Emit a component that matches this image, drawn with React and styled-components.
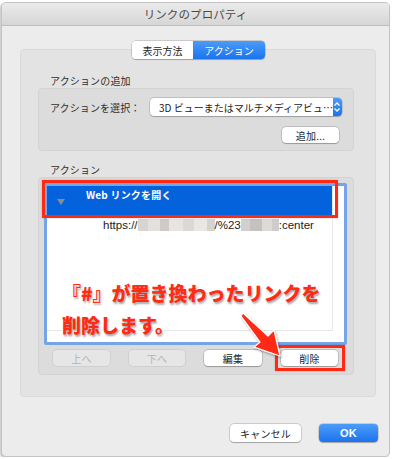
import styled, { createGlobalStyle } from 'styled-components'

const GlobalStyle = createGlobalStyle`
	*, *::before, *::after {
		box-sizing: border-box;
	}
	html, body {
		margin: 0;
		padding: 0;
		background: #ffffff;
	}
	body {
		font-family: "Noto Sans CJK JP", "Liberation Sans", sans-serif;
		color: #2b2b2b;
	}
`

const blurBlocks = [
	['#d9d4d2', 10], ['#e4e0de', 12], ['#cfcac8', 9], ['#e7e4e2', 14], ['#dcd8d6', 11], ['#e9e7e6', 13], ['#d6d2d0', 8],
]
const blurBlocks2 = [['#d2cfce', 9], ['#c4c1c0', 12], ['#dedad8', 10], ['#cfcccb', 7]]

export default function App() {
	return (
		<>
			<GlobalStyle />
			<Window>
				<TitleBar>リンクのプロパティ</TitleBar>
				<Body>
					<Segments>
						<Segment>表示方法</Segment>
						<Segment $active>アクション</Segment>
					</Segments>
					<GroupBox>
						<SectionLabel>アクションの追加</SectionLabel>
						<InnerBox>
							<SelectRow>
								<FieldLabel>アクションを選択：</FieldLabel>
								<Select>
									<span>3D ビューまたはマルチメディアビュ…</span>
									<Stepper>
										<svg width='8' height='12' viewBox='0 0 8 12'>
											<path d='M1.5 4.5 L4 2 L6.5 4.5 M1.5 7.5 L4 10 L6.5 7.5' fill='none' stroke='#fff' strokeWidth='1.3' />
										</svg>
									</Stepper>
								</Select>
							</SelectRow>
							<AddRow>
								<Button $w={57}>追加...</Button>
							</AddRow>
						</InnerBox>

						<SectionLabel $top={12}>アクション</SectionLabel>
						<InnerBox $list>
							<ListFrame>
								<ListInner>
									<SelectedRow>
										<Disclosure />
										<RowTitle>Web リンクを開く</RowTitle>
									</SelectedRow>
									<UrlRow>
										https://
										<Blur>
											{blurBlocks.map(([c, w], i) => (
												<i key={i} style={{ background: c, width: w }} />
											))}
										</Blur>
										/%23
										<Blur>
											{blurBlocks2.map(([c, w], i) => (
												<i key={i} style={{ background: c, width: w }} />
											))}
										</Blur>
										:center
									</UrlRow>
								</ListInner>
							</ListFrame>
							<ButtonRow>
								<Button $w={57} $disabled>上へ</Button>
								<Button $w={56} $disabled>下へ</Button>
								<Button $w={58}>編集</Button>
								<Button $w={57}>削除</Button>
							</ButtonRow>
						</InnerBox>
					</GroupBox>
					<Footer>
						<Button $w={71} $h={18}>キャンセル</Button>
						<Button $w={59} $h={18} $primary>OK</Button>
					</Footer>
				</Body>

				<Callout>
					『#』が置き換わったリンクを
					<br />
					削除します。
				</Callout>
				<RedBox $x={42} $y={180} $w={296} $h={38} />
				<RedBox $x={275} $y={345} $w={70} $h={26} />
				<Arrow width='394' height='459' viewBox='0 0 394 459'>
					<defs>
						<filter id='sh' x='-20%' y='-20%' width='140%' height='140%'>
							<feDropShadow dx='1' dy='1.5' stdDeviation='1.2' floodColor='#000' floodOpacity='0.35' />
						</filter>
					</defs>
					<polygon
						points='241,316 243,313 268,336 274,330 280,356 254,347 260,342'
						fill='#ff2a14'
						stroke='#fff'
						strokeWidth='1.2'
						strokeLinejoin='round'
						filter='url(#sh)'
					/>
				</Arrow>
			</Window>
		</>
	)
}

const Window = styled.div`
	position: relative;
	margin: 2px 0 0 1px;
	width: 389px;
	height: 455px;
	background: #ececec;
	border: 1px solid #c4c4c4;
	border-radius: 5px;
	box-shadow: -1px 1px 2px rgba(0, 0, 0, 0.25);
	overflow: hidden;
`

const TitleBar = styled.div`
	height: 23px;
	display: flex;
	align-items: center;
	justify-content: center;
	background: linear-gradient(#ebebeb, #d6d6d6);
	border-bottom: 1px solid #bdbdbd;
	font-size: 11.5px;
	color: #4a4a4a;
	letter-spacing: 0.1px;
`

const Body = styled.div`
	padding: 15px 13px 0 18px;
	display: flex;
	flex-direction: column;
`

const Segments = styled.div`
	position: relative;
	z-index: 1;
	align-self: flex-start;
	margin-left: 112px;
	margin-bottom: -10px;
	display: flex;
	height: 18px;
	border-radius: 4px;
	box-shadow: 0 0 0 0.5px rgba(0, 0, 0, 0.25), 0 0.5px 1px rgba(0, 0, 0, 0.2);
	overflow: hidden;
	background: #fff;
`

const Segment = styled.div`
	width: ${({ $active }) => ($active ? '72px' : '61px')};
	display: flex;
	align-items: center;
	justify-content: center;
	font-size: 10px;
	color: ${({ $active }) => ($active ? '#fff' : '#262626')};
	background: ${({ $active }) => ($active ? 'linear-gradient(#4a9bf8, #1b74ee)' : '#ffffff')};
`

const GroupBox = styled.div`
	height: 348px;
	background: #e3e3e3;
	border: 1px solid #dadada;
	border-radius: 4px;
	padding: 24px 21px 0 17px;
	display: flex;
	flex-direction: column;
`

const SectionLabel = styled.div`
	height: 14px;
	line-height: 14px;
	margin-top: ${({ $top }) => ($top || 0)}px;
	padding-left: 12px;
	font-size: 10px;
	letter-spacing: 0.15px;
	color: #2f2f2f;
`

const InnerBox = styled.div`
	height: ${({ $list }) => ($list ? '198px' : '63px')};
	background: #dcdcdc;
	border: 1px solid #d3d3d3;
	border-radius: 4px;
	display: flex;
	flex-direction: column;
	padding: ${({ $list }) => ($list ? '5px 6px 0 5px' : '9px 11px 0 11px')};
`

const SelectRow = styled.div`
	display: flex;
	align-items: center;
	justify-content: space-between;
`

const FieldLabel = styled.div`
	font-size: 10px;
	letter-spacing: 0.1px;
	color: #2f2f2f;
`

const Select = styled.div`
	width: 192px;
	height: 18px;
	display: flex;
	align-items: center;
	justify-content: space-between;
	background: #fff;
	border-radius: 4px;
	box-shadow: 0 0 0 0.5px rgba(0, 0, 0, 0.22), 0 0.5px 1px rgba(0, 0, 0, 0.2);
	padding-left: 9px;
	font-size: 10px;
	color: #222;
	overflow: hidden;
	white-space: nowrap;
`

const Stepper = styled.div`
	width: 15px;
	height: 18px;
	display: flex;
	align-items: center;
	justify-content: center;
	background: linear-gradient(#4c9cf8, #1b73ee);
`

const AddRow = styled.div`
	display: flex;
	justify-content: flex-end;
	padding-right: 3px;
	margin-top: 11px;
`

const Button = styled.div`
	width: ${({ $w }) => $w}px;
	height: ${({ $h }) => $h || 16}px;
	display: flex;
	align-items: center;
	justify-content: center;
	border-radius: 4px;
	font-size: ${({ $primary }) => ($primary ? '11px' : '10px')};
	font-family: ${({ $primary }) => ($primary ? '"Liberation Sans", sans-serif' : 'inherit')};
	font-weight: ${({ $primary }) => ($primary ? 700 : 400)};
	letter-spacing: 0.2px;
	color: ${({ $primary, $disabled }) => ($primary ? '#fff' : $disabled ? '#b3b3b3' : '#222')};
	background: ${({ $primary, $disabled }) =>
		$primary ? 'linear-gradient(#4c9cf8, #1b73ee)' : $disabled ? '#e6e6e6' : '#ffffff'};
	box-shadow: ${({ $disabled }) =>
		$disabled
			? '0 0 0 0.5px rgba(0,0,0,0.12)'
			: '0 0 0 0.5px rgba(0,0,0,0.25), 0 0.5px 1px rgba(0,0,0,0.2)'};
`

const ListFrame = styled.div`
	height: 162px;
	border: 3px solid #76a4e8;
	border-radius: 2px;
	background: #fff;
	display: flex;
`

const ListInner = styled.div`
	width: 286px;
	height: 145px;
	border-right: 1px solid #e6e6e6;
	border-bottom: 1px solid #e6e6e6;
	display: flex;
	flex-direction: column;
`

const SelectedRow = styled.div`
	height: 29px;
	flex: none;
	background: #0463dc;
	position: relative;
	display: flex;
	align-items: flex-start;
`

const Disclosure = styled.div`
	position: absolute;
	left: 10px;
	top: 13px;
	width: 0;
	height: 0;
	border-left: 4px solid transparent;
	border-right: 4px solid transparent;
	border-top: 6px solid #8c8c8c;
`

const RowTitle = styled.div`
	margin: 0 0 0 39px;
	line-height: 18px;
	font-size: 10px;
	font-weight: 700;
	color: #fff;
	letter-spacing: 0.2px;
`

const UrlRow = styled.div`
	display: flex;
	align-items: center;
	height: 20px;
	padding-left: 56px;
	font-family: "Liberation Sans", sans-serif;
	font-size: 11.5px;
	color: #1c1c1c;
	white-space: nowrap;
`

const Blur = styled.span`
	display: inline-flex;
	height: 12px;

	i {
		display: block;
		height: 12px;
	}
`

const ButtonRow = styled.div`
	display: flex;
	gap: 19px;
	padding-left: 9px;
	margin-top: 5px;
`

const Footer = styled.div`
	display: flex;
	justify-content: flex-end;
	gap: 18px;
	margin-top: 27px;
	margin-right: -2px;
`

const Callout = styled.div`
	position: absolute;
	left: 60px;
	top: 274px;
	font-size: 19px;
	line-height: 32px;
	font-weight: 900;
	color: #ff2b14;
	white-space: nowrap;
	-webkit-text-stroke: 3px #ffffff;
	paint-order: stroke fill;
	text-shadow: 1px 1.5px 2px rgba(0, 0, 0, 0.35);
`

const RedBox = styled.div`
	position: absolute;
	left: ${({ $x }) => $x - 2}px;
	top: ${({ $y }) => $y - 3}px;
	width: ${({ $w }) => $w}px;
	height: ${({ $h }) => $h}px;
	border: 3px solid #ff2a14;
	box-shadow: 0 0 2px rgba(0, 0, 0, 0.2);
`

const Arrow = styled.svg`
	position: absolute;
	left: -2px;
	top: -3px;
	pointer-events: none;
`
